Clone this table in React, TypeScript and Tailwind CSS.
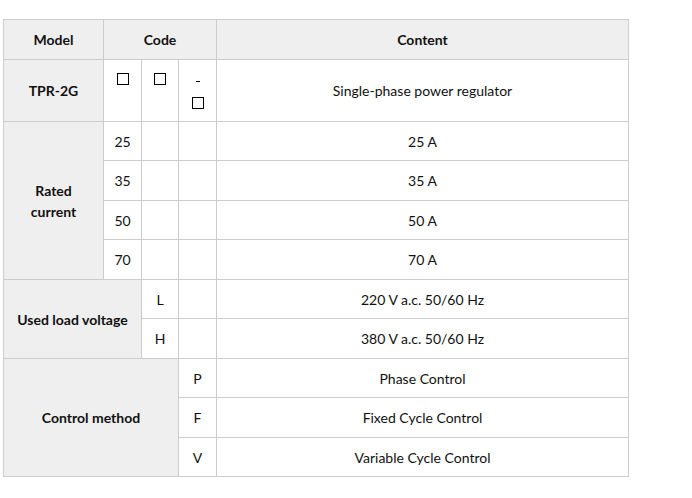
import React from "react";

const Box = () => (
  <span className="inline-block w-[12px] h-[12px] border border-black align-middle" />
);

const head = "bg-[#efefef] border border-[#cccccc] font-bold text-center align-middle";
const cell = "border border-[#cccccc] text-center align-middle";

const App: React.FC = () => {
  return (
    <div className="w-[692px] h-[498px] bg-white pt-[19px] pl-[3px] font-['Lato','Liberation_Sans',sans-serif] text-[14px] text-[#111]">
      <table className="border-collapse table-fixed w-[625px]">
        <colgroup>
          <col className="w-[100px]" />
          <col className="w-[38px]" />
          <col className="w-[37px]" />
          <col className="w-[38px]" />
          <col className="w-[412px]" />
        </colgroup>
        <tbody>
          <tr className="h-[40px]">
            <td className={head}>Model</td>
            <td className={head} colSpan={3}>Code</td>
            <td className={head}>Content</td>
          </tr>
          <tr className="h-[62px]">
            <td className={head}>TPR-2G</td>
            <td className={`${cell} !align-top pt-[13px]`}>
              <div className="flex justify-center"><Box /></div>
            </td>
            <td className={`${cell} !align-top pt-[13px]`}>
              <div className="flex justify-center"><Box /></div>
            </td>
            <td className={`${cell} !align-top pt-[13px]`}>
              <div className="flex flex-col items-center gap-[15px]">
                <span className="w-[4px] h-[1px] bg-black mt-[8px]" />
                <Box />
              </div>
            </td>
            <td className={cell}>Single-phase power regulator</td>
          </tr>
          <tr className="h-[39px]">
            <td className={head} rowSpan={4}>Rated<br />current</td>
            <td className={cell}>25</td>
            <td className={cell}></td>
            <td className={cell}></td>
            <td className={cell}>25 A</td>
          </tr>
          <tr className="h-[40px]">
            <td className={cell}>35</td>
            <td className={cell}></td>
            <td className={cell}></td>
            <td className={cell}>35 A</td>
          </tr>
          <tr className="h-[39px]">
            <td className={cell}>50</td>
            <td className={cell}></td>
            <td className={cell}></td>
            <td className={cell}>50 A</td>
          </tr>
          <tr className="h-[40px]">
            <td className={cell}>70</td>
            <td className={cell}></td>
            <td className={cell}></td>
            <td className={cell}>70 A</td>
          </tr>
          <tr className="h-[39px]">
            <td className={head} colSpan={2} rowSpan={2}>Used load voltage</td>
            <td className={cell}>L</td>
            <td className={cell}></td>
            <td className={cell}>220 V a.c. 50/60 Hz</td>
          </tr>
          <tr className="h-[40px]">
            <td className={cell}>H</td>
            <td className={cell}></td>
            <td className={cell}>380 V a.c. 50/60 Hz</td>
          </tr>
          <tr className="h-[39px]">
            <td className={head} colSpan={3} rowSpan={3}>Control method</td>
            <td className={cell}>P</td>
            <td className={cell}>Phase Control</td>
          </tr>
          <tr className="h-[40px]">
            <td className={cell}>F</td>
            <td className={cell}>Fixed Cycle Control</td>
          </tr>
          <tr className="h-[39px]">
            <td className={cell}>V</td>
            <td className={cell}>Variable Cycle Control</td>
          </tr>
        </tbody>
      </table>
    </div>
  );
};

export default App;
